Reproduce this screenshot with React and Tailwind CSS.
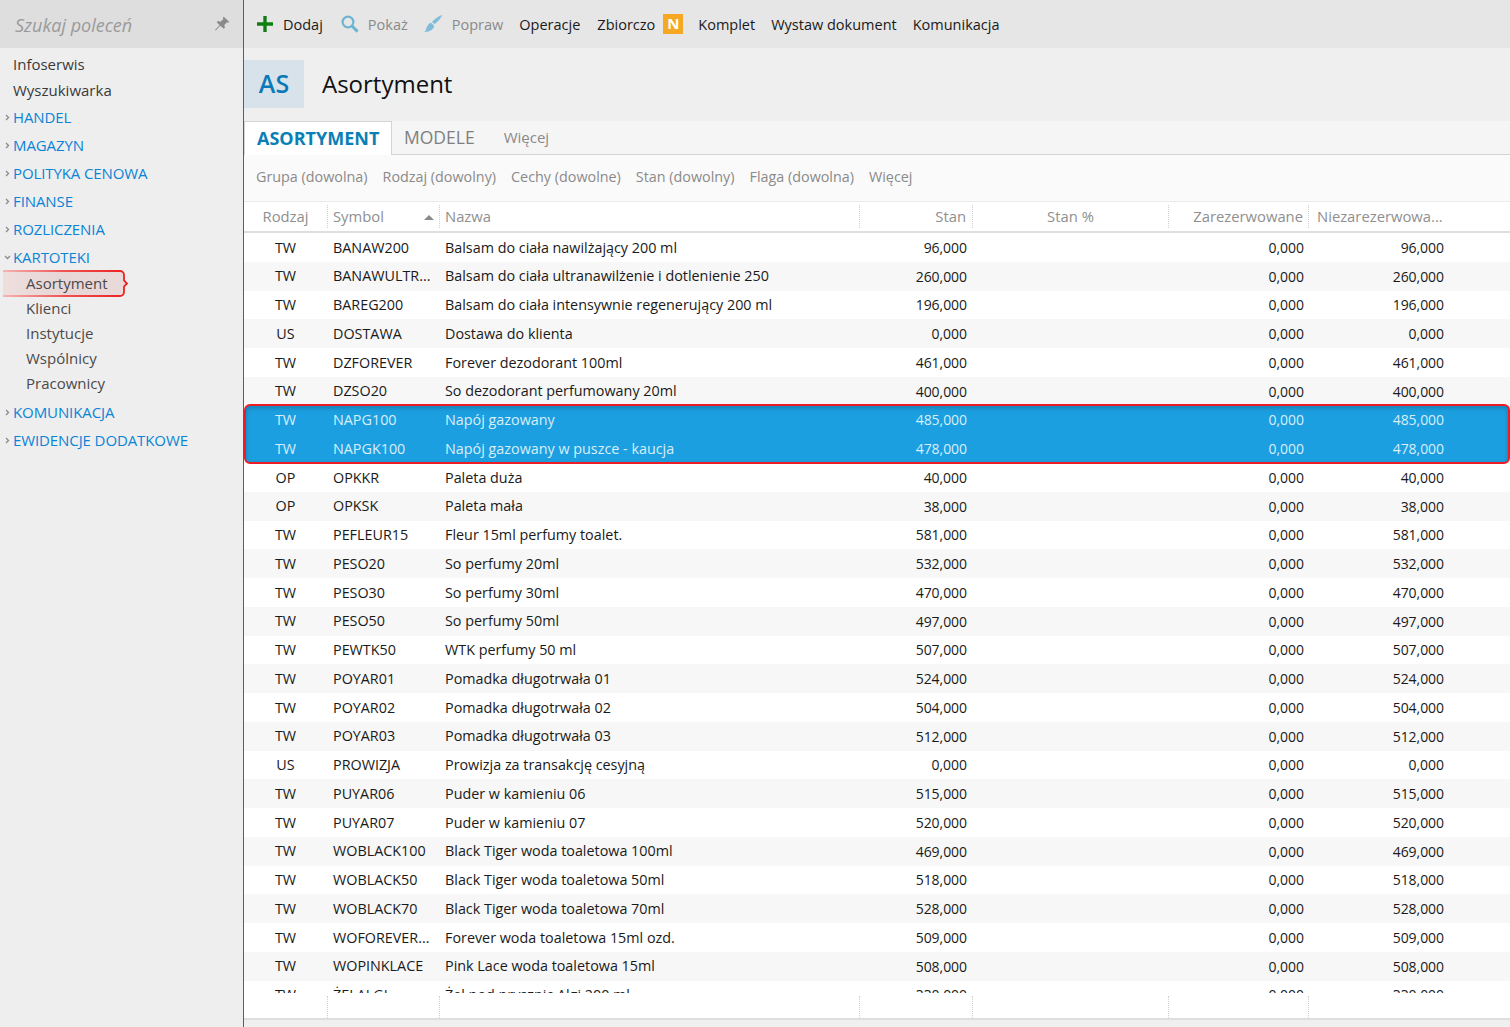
import React from "react";

const rows = [
  ["TW","BANAW200","Balsam do ciała nawilżający 200 ml","96,000"],
  ["TW","BANAWULTR...","Balsam do ciała ultranawilżenie i dotlenienie 250","260,000"],
  ["TW","BAREG200","Balsam do ciała intensywnie regenerujący 200 ml","196,000"],
  ["US","DOSTAWA","Dostawa do klienta","0,000"],
  ["TW","DZFOREVER","Forever dezodorant 100ml","461,000"],
  ["TW","DZSO20","So dezodorant perfumowany 20ml","400,000"],
  ["TW","NAPG100","Napój gazowany","485,000"],
  ["TW","NAPGK100","Napój gazowany w puszce - kaucja","478,000"],
  ["OP","OPKKR","Paleta duża","40,000"],
  ["OP","OPKSK","Paleta mała","38,000"],
  ["TW","PEFLEUR15","Fleur 15ml perfumy toalet.","581,000"],
  ["TW","PESO20","So perfumy 20ml","532,000"],
  ["TW","PESO30","So perfumy 30ml","470,000"],
  ["TW","PESO50","So perfumy 50ml","497,000"],
  ["TW","PEWTK50","WTK perfumy 50 ml","507,000"],
  ["TW","POYAR01","Pomadka długotrwała 01","524,000"],
  ["TW","POYAR02","Pomadka długotrwała 02","504,000"],
  ["TW","POYAR03","Pomadka długotrwała 03","512,000"],
  ["US","PROWIZJA","Prowizja za transakcję cesyjną","0,000"],
  ["TW","PUYAR06","Puder w kamieniu 06","515,000"],
  ["TW","PUYAR07","Puder w kamieniu 07","520,000"],
  ["TW","WOBLACK100","Black Tiger woda toaletowa 100ml","469,000"],
  ["TW","WOBLACK50","Black Tiger woda toaletowa 50ml","518,000"],
  ["TW","WOBLACK70","Black Tiger woda toaletowa 70ml","528,000"],
  ["TW","WOFOREVER...","Forever woda toaletowa 15ml ozd.","509,000"],
  ["TW","WOPINKLACE","Pink Lace woda toaletowa 15ml","508,000"],
  ["TW","ŻELALGI","Żel pod prysznic Algi 200 ml","330,000"],
];

const gridCols = "grid grid-cols-[83px_112px_420px_113px_196px_140px_141px_1fr]";
const num = "text-right text-[14px] tracking-[-0.05px]";

function Row({ r, i, selected }) {
  const bg = selected ? "" : i % 2 === 1 ? "bg-[#f7f7f7]" : "bg-white";
  const color = selected ? "text-[#d8eefa]" : "text-[#1a1a1a]";
  return (
    <div className={`${gridCols} relative h-[28.76px] items-center ${bg} ${color}`}>
      <div className="text-center">{r[0]}</div>
      <div className="pl-[6px] whitespace-nowrap">{r[1]}</div>
      <div className="pl-[6px] whitespace-nowrap">{r[2]}</div>
      <div className={`${num} pr-[5px]`}>{r[3]}</div>
      <div />
      <div className={`${num} pr-[4px]`}>0,000</div>
      <div className={`${num} pr-[5px]`}>{r[3]}</div>
      <div />
    </div>
  );
}

function Chevron({ open }) {
  return (
    <svg width="7" height="7" viewBox="0 0 7 7" className="mr-[2px] ml-[4px] shrink-0" fill="none" stroke="#8a8a8a" strokeWidth="1.3">
      {open ? <path d="M1 2l2.5 2.5L6 2" /> : <path d="M2 1l2.5 2.5L2 6" />}
    </svg>
  );
}

function Group({ label, open, className }) {
  return (
    <div className={`flex items-center h-[28px] text-[#0a84d6] tracking-[-0.1px] ${className || ""}`}>
      <Chevron open={open} />
      <span>{label}</span>
    </div>
  );
}

function Sidebar() {
  const sub = "h-[25px] pl-[26px] flex items-center text-[#4a4a4a]";
  return (
    <aside className="w-[244px] shrink-0 bg-[#eeeeee] border-r border-[#1f6f9f] flex flex-col">
      <div className="h-[48px] bg-[#dedede] flex items-center justify-between pl-[15px] pr-[13px] pt-[2px]">
        <span className="italic text-[18px] text-[#9a9a9a]">Szukaj poleceń</span>
        <svg width="16" height="16" viewBox="0 0 15 15" fill="#8a8a8a" className="-mt-[2px]">
          <path d="M9.2 .6l5.2 5-1.2.7-1-.5-2.5 2.6.5 2.6-1 1L5.9 9.2 1.6 13.6 1 13l4.3-4.4L2.6 5.8l1-1 2.6.5 2.6-2.6-.5-1z" />
        </svg>
      </div>
      <div className="pt-[3px] text-[15px] tracking-normal">
        <div className="h-[26px] pl-[13px] flex items-center text-[#3a3a3a]">Infoserwis</div>
        <div className="h-[26px] pl-[13px] flex items-center text-[#3a3a3a]">Wyszukiwarka</div>
        <Group label="HANDEL" />
        <Group label="MAGAZYN" />
        <Group label="POLITYKA CENOWA" />
        <Group label="FINANSE" />
        <Group label="ROZLICZENIA" />
        <Group label="KARTOTEKI" open />
        <div className={`relative ${sub}`}>
          <svg width="130" height="31" viewBox="0 0 130 31" className="absolute left-0 top-[-3px]" fill="none">
            <defs>
              <linearGradient id="fillg" x1="0" x2="1" y1="0" y2="0">
                <stop offset="0" stopColor="#eedede" />
                <stop offset="0.5" stopColor="#e8d6d6" />
                <stop offset="1" stopColor="#e9dada" />
              </linearGradient>
              <linearGradient id="strokeg" x1="0" x2="1" y1="0" y2="0">
                <stop offset="0" stopColor="#f5b5b5" />
                <stop offset="0.5" stopColor="#f05050" />
                <stop offset="1" stopColor="#ee2020" />
              </linearGradient>
            </defs>
            <path d="M3 3H120a4 4 0 0 1 4 4V12.5L127 15.5 124 18.5V24a4 4 0 0 1-4 4H3" fill="url(#fillg)" stroke="url(#strokeg)" strokeWidth="1.8" />
          </svg>
          <span className="relative">Asortyment</span>
        </div>
        <div className={sub}>Klienci</div>
        <div className={sub}>Instytucje</div>
        <div className={sub}>Wspólnicy</div>
        <div className={sub}>Pracownicy</div>
        <Group label="KOMUNIKACJA" className="mt-[2px]" />
        <Group label="EWIDENCJE DODATKOWE" />
      </div>
    </aside>
  );
}

function Toolbar() {
  return (
    <div className="h-[48px] bg-[#e6e6e6] flex items-center pl-[13px] text-[14.5px] tracking-normal text-[#1a1a1a] pt-[1px]">
      <svg width="16" height="16" viewBox="0 0 17 17" fill="#0e7d12" className="mr-[10px] -mt-[2px]"><path d="M6.7 0h3.6v6.7H17v3.6h-6.7V17H6.7v-6.7H0V6.7h6.7z" /></svg>
      <span className="mr-[18px]">Dodaj</span>
      <svg width="18" height="18" viewBox="0 0 18 18" fill="none" stroke="#6db4d4" className="mr-[9px] -mt-[2px]">
        <circle cx="7" cy="7" r="5.4" strokeWidth="2.2" />
        <path d="M11 11l5.6 5.6" strokeWidth="3" />
      </svg>
      <span className="mr-[16px] text-[#8a8a8a]">Pokaż</span>
      <svg width="18" height="18" viewBox="0 0 18 18" className="mr-[10px] -mt-[1px]" fill="#7fbcd8">
        <path d="M18 0c-1 3-4.5 7-7.5 9.3L8 7C10.5 4 15 1 18 0z" />
        <path d="M7 7.8l3.2 3c-.4 3.3-4 6.4-10 6.2 2.4-1.6 1.8-3.8 3-5.7C4 9.8 5.4 8.2 7 7.8z" />
      </svg>
      <span className="mr-[16px] text-[#8a8a8a]">Popraw</span>
      <span className="mr-[17px]">Operacje</span>
      <span className="mr-[8px]">Zbiorczo</span>
      <span className="w-[20px] h-[20px] -mt-[2px] bg-[#f7a823] text-white font-bold text-[15px] flex items-center justify-center mr-[15px]">N</span>
      <span className="mr-[16px]">Komplet</span>
      <span className="mr-[16px]">Wystaw dokument</span>
      <span>Komunikacja</span>
    </div>
  );
}

function Main() {
  const hcell = "border-l border-dotted border-[#cfcfcf] h-full flex items-center";
  return (
    <main className="flex-1 min-w-0 flex flex-col">
      <Toolbar />
      <div className="h-[73px] bg-[#efefef] pt-[12px]">
        <div className="flex items-center h-[48px]">
          <div className="w-[60px] h-[48px] bg-[#d7e2ea] text-[#0b78b8] font-semibold text-[25px] flex items-center justify-center pb-[1px]">AS</div>
          <div className="ml-[18px] text-[24px] tracking-normal text-[#111111] pb-[1px]">Asortyment</div>
        </div>
      </div>
      <div className="h-[34px] bg-[#f5f5f5] flex items-stretch border-b border-[#d4d4d4]">
        <div className="w-[148px] bg-white border border-b-0 border-[#d4d4d4] -mb-px flex items-center pl-[12px] text-[18px] tracking-normal font-bold text-[#0a7fb5]">ASORTYMENT</div>
        <div className="pl-[12px] flex items-center text-[17.5px] text-[#7f7f7f]">MODELE</div>
        <div className="pl-[29px] flex items-center text-[15px] text-[#8a8a8a]">Więcej</div>
      </div>
      <div className="h-[47px] bg-[#fafafa] border-b border-[#ececec] flex items-center gap-[15px] pl-[12px] pb-[2px] text-[#8a8a8a]">
        <span>Grupa (dowolna)</span>
        <span>Rodzaj (dowolny)</span>
        <span>Cechy (dowolne)</span>
        <span>Stan (dowolny)</span>
        <span>Flaga (dowolna)</span>
        <span>Więcej</span>
      </div>
      <div className={`${gridCols} h-[31px] bg-white border-b-2 border-[#dedede] text-[#8f8f8f] text-[14.8px] items-center py-[3px]`}>
        <div className="h-full flex items-center justify-center">Rodzaj</div>
        <div className={`${hcell} pl-[5px] relative`}>
          Symbol
          <svg width="10" height="5" viewBox="0 0 10 5" fill="#8a8a8a" className="absolute right-[5px] top-[10px]"><path d="M5 0l5 5H0z" /></svg>
        </div>
        <div className={`${hcell} pl-[5px]`}>Nazwa</div>
        <div className={`${hcell} justify-end pr-[6px]`}>Stan</div>
        <div className={`${hcell} justify-center`}>Stan %</div>
        <div className={`${hcell} justify-end pr-[5px]`}>Zarezerwowane</div>
        <div className={`${hcell} pl-[8px] whitespace-nowrap`}>Niezarezerwowa...</div>
        <div />
      </div>
      <div className="h-[760px] overflow-hidden bg-white">
        {rows.slice(0, 6).map((r, i) => <Row key={r[1]} r={r} i={i} />)}
        <div className="relative">
          <div className="absolute inset-x-0 -top-[2px] -bottom-[1px] z-10 bg-[#1c9fe0] border-2 border-[#ee1c25] rounded-[6px] shadow-[inset_0_2px_5px_rgba(0,0,0,0.2)]" />
          <div className="relative z-20">
            {rows.slice(6, 8).map((r, i) => <Row key={r[1]} r={r} i={i + 6} selected />)}
          </div>
        </div>
        {rows.slice(8).map((r, i) => <Row key={r[1]} r={r} i={i + 8} />)}
      </div>
      <div className={`${gridCols} h-[27px] bg-white border-b-2 border-[#dedede] pt-[3px]`}>
        <div />
        <div className={hcell} />
        <div className={hcell} />
        <div className={hcell} />
        <div className={hcell} />
        <div className={hcell} />
        <div className={hcell} />
        <div />
      </div>
      <div className="flex-1 bg-[#efefef]" />
    </main>
  );
}

export default function App() {
  return (
    <div className="w-[1510px] h-[1027px] overflow-hidden flex bg-white text-[14.35px] font-['Open_Sans',sans-serif]">
      <Sidebar />
      <Main />
    </div>
  );
}
